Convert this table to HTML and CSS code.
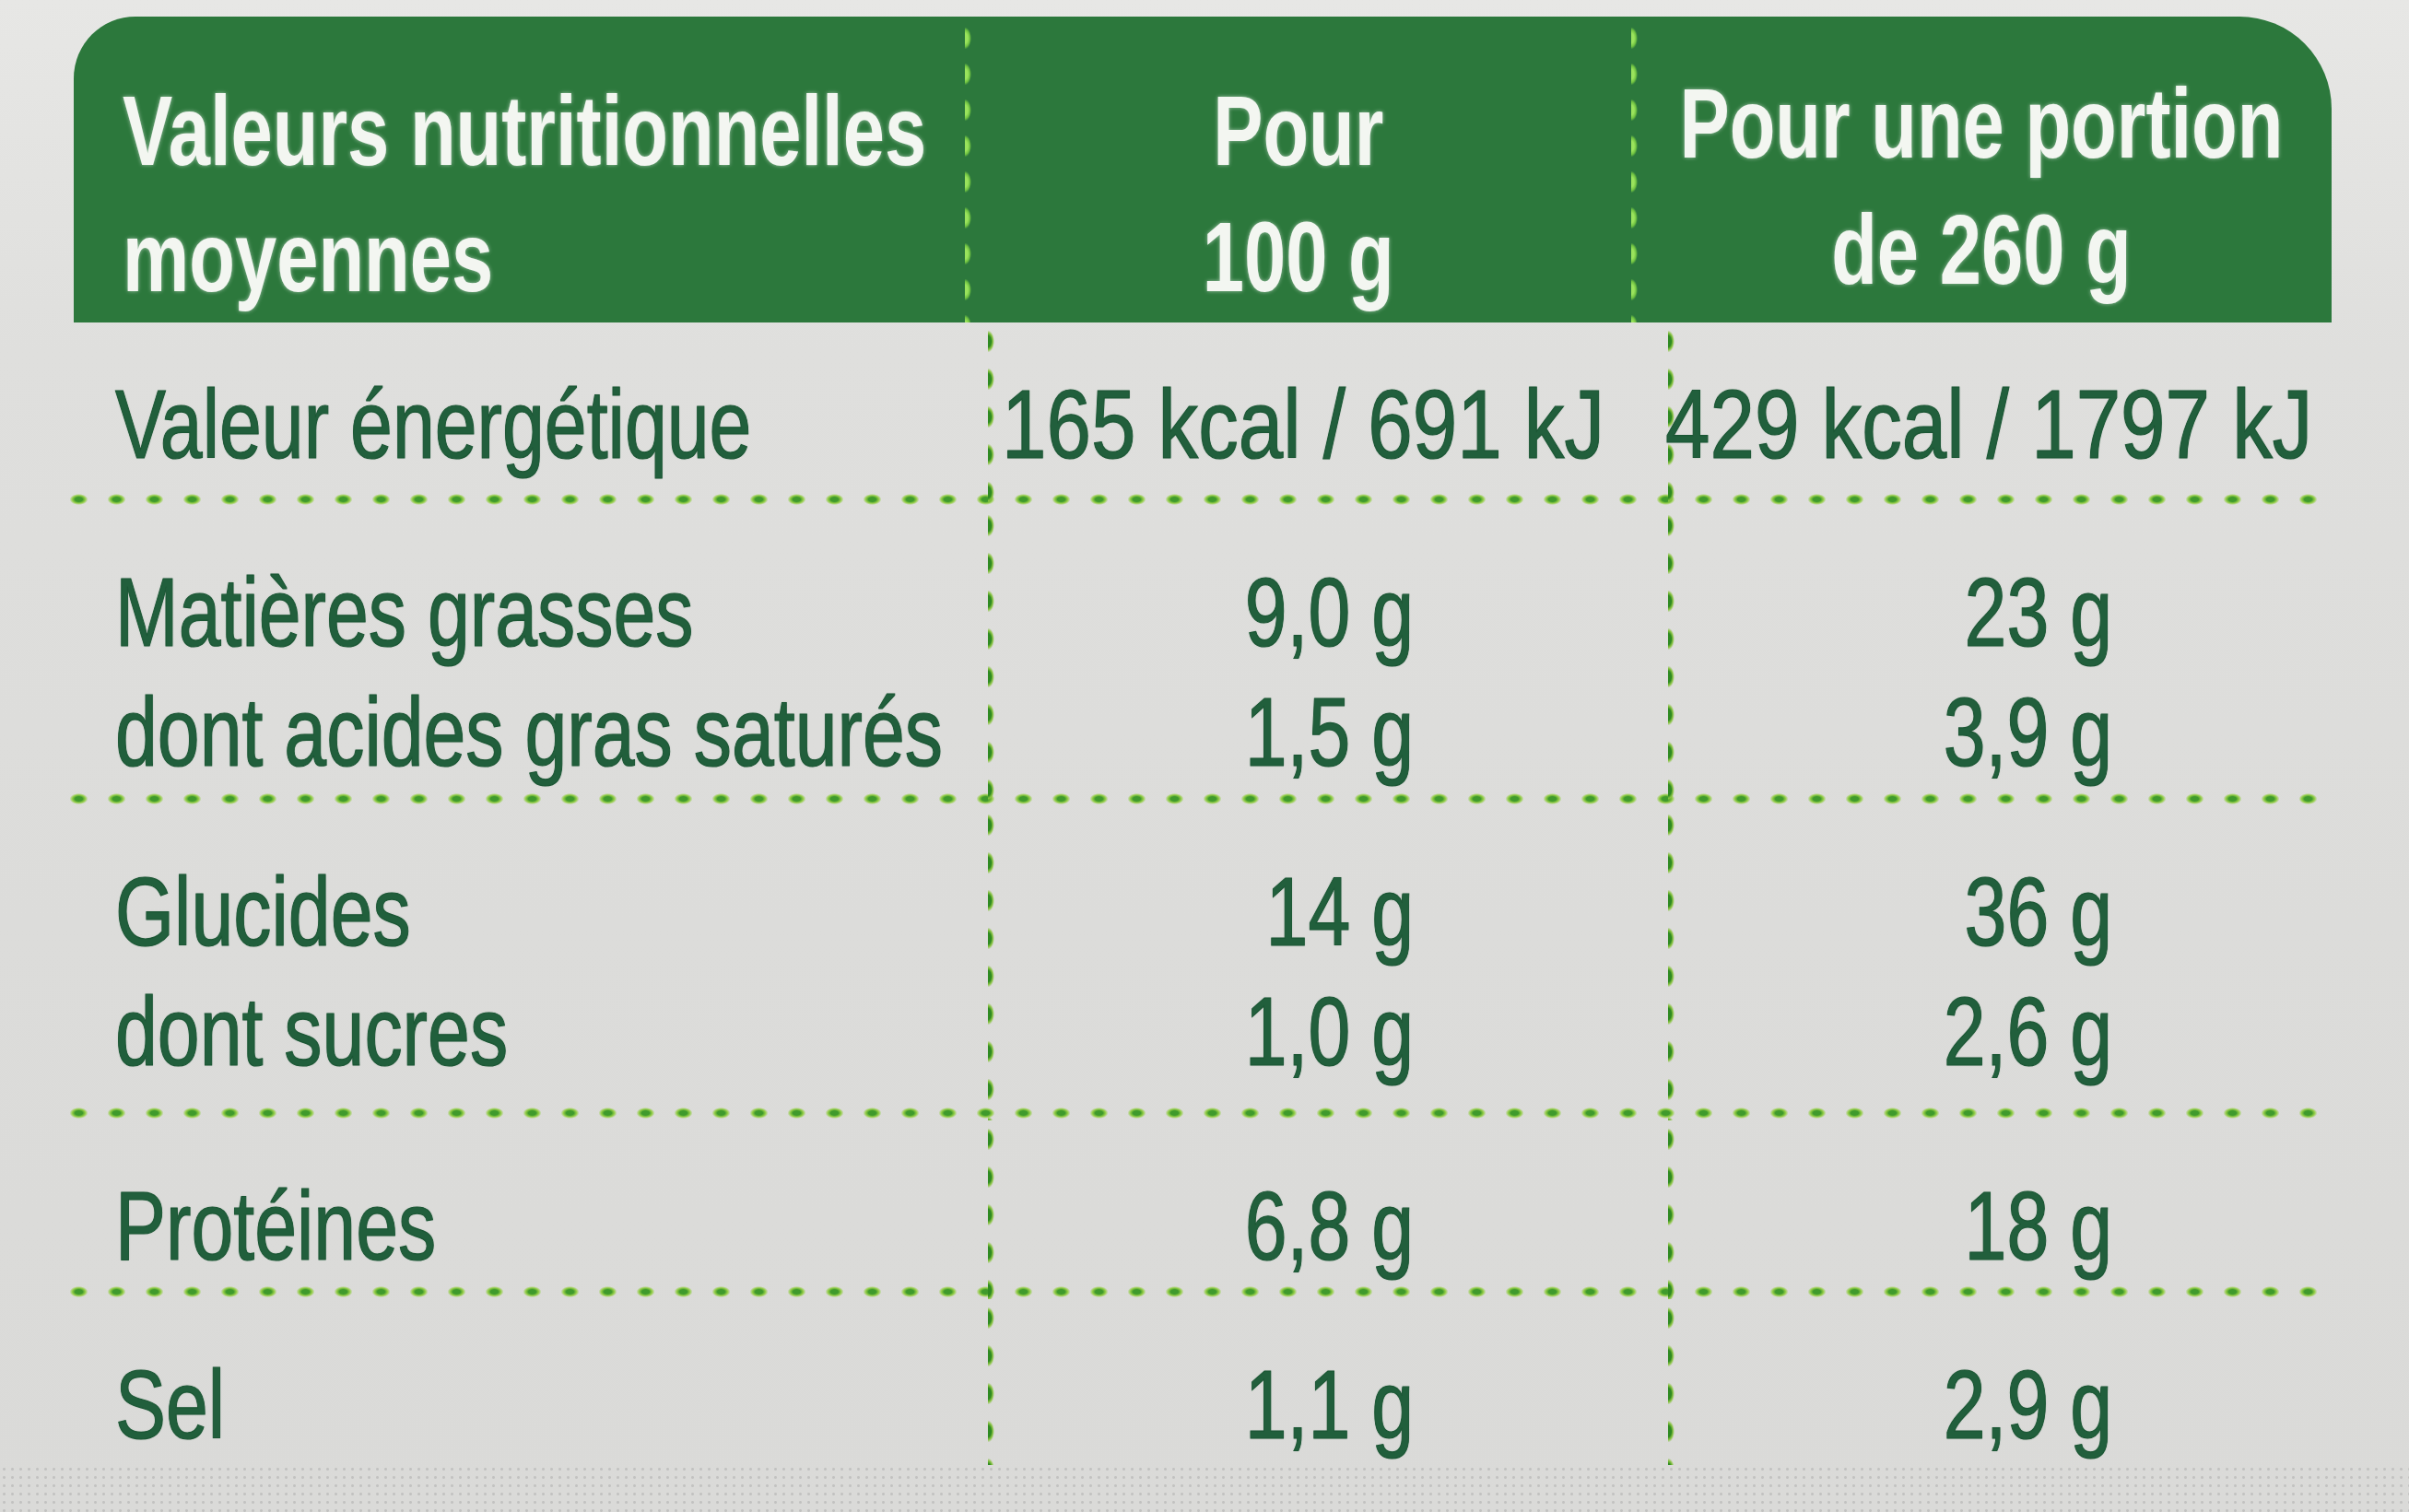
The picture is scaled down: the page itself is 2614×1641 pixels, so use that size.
FILE: index.html
```html
<!DOCTYPE html>
<html lang="fr">
<head>
<meta charset="utf-8">
<title>Valeurs nutritionnelles</title>
<link rel="stylesheet" href="styles.css">
</head>
<body>
<div class="label">
  <div class="head">
    <div class="hcell h-name"><div class="tx">Valeurs nutritionnelles<br>moyennes</div></div>
    <div class="hcell h-center"><div class="tx">Pour<br>100 g</div></div>
    <div class="hcell h-center h-portion"><div class="tx">Pour une portion<br>de 260 g</div></div>
  </div>
  <div class="row r-energy">
    <div class="cell name"><div class="tx">Valeur énergétique</div></div>
    <div class="cell val energy e1"><div class="tx">165 kcal / 691 kJ</div></div>
    <div class="cell val energy e2"><div class="tx">429 kcal / 1797 kJ</div></div>
  </div>
  <div class="row r-fat">
    <div class="cell name"><div class="tx">Matières grasses<br>dont acides gras saturés</div></div>
    <div class="cell val v1"><div class="tx">9,0 g<br>1,5 g</div></div>
    <div class="cell val v2"><div class="tx">23 g<br>3,9 g</div></div>
  </div>
  <div class="row r-carb">
    <div class="cell name"><div class="tx">Glucides<br>dont sucres</div></div>
    <div class="cell val v1"><div class="tx">14 g<br>1,0 g</div></div>
    <div class="cell val v2"><div class="tx">36 g<br>2,6 g</div></div>
  </div>
  <div class="row r-prot">
    <div class="cell name"><div class="tx">Protéines</div></div>
    <div class="cell val v1"><div class="tx">6,8 g</div></div>
    <div class="cell val v2"><div class="tx">18 g</div></div>
  </div>
  <div class="row r-salt">
    <div class="cell name"><div class="tx">Sel</div></div>
    <div class="cell val v1"><div class="tx">1,1 g</div></div>
    <div class="cell val v2"><div class="tx">2,9 g</div></div>
  </div>
</div>
<div class="texture"></div>
</body>
</html>
```
FILE: styles.css
```css
html, body {
  margin: 0;
  padding: 0;
}
body {
  width: 2614px;
  height: 1641px;
  overflow: hidden;
  background: linear-gradient(180deg, #e7e7e5 0px, #dfdfdd 380px, #dcdcda 1000px, #dadad8 1641px);
  font-family: "Liberation Sans", Arial, sans-serif;
}
.tx {
  white-space: nowrap;
}
.label {
  margin-left: 65px;
  width: 2465px;
  padding-top: 18px;
}
.head {
  margin-left: 15px;
  height: 332px;
  background: #2c783c;
  border-radius: 67px 100px 0 0;
  display: grid;
  grid-template-columns: 967px 723px minmax(0, 1fr);
  color: #f3f6f1;
  font-weight: 700;
  font-size: 107px;
  line-height: 137px;
  text-shadow: 0 0 5px rgba(255,255,255,0.55);
}
.hcell {
  padding-top: 56px;
  min-width: 0;
}
.h-name {
  padding-left: 53px;
}
.h-name .tx {
  transform: scaleX(0.76);
  transform-origin: 0 0;
}
.h-center {
  display: flex;
  justify-content: center;
  align-items: flex-start;
  background-image: radial-gradient(7px 12px at 50% 50%, #9ae35c 0 45%, #72c542 75%, transparent 100%);
  background-size: 14px 39px;
  background-repeat: repeat-y;
  background-position: -7px 4px;
}
.h-portion {
  padding-top: 48px;
}
.h-center .tx {
  flex: none;
  text-align: center;
  transform: scaleX(0.76);
  transform-origin: 50% 0;
}
.row {
  display: grid;
  grid-template-columns: 1007px 738px minmax(0, 1fr);
  color: #215f3c;
  font-size: 105px;
  line-height: 130px;
  -webkit-text-stroke: 1.2px #1b5634;
  text-shadow: 0 0 2px rgba(25,85,50,0.45);
  background-image: radial-gradient(10px 6px at 50% 50%, #3f9a2c 0 40%, #93cd46 70%, transparent 100%);
  background-size: 41px 16px;
  background-repeat: repeat-x;
  background-position: 0 100%;
}
.r-energy { height: 200px; }
.r-fat { height: 325px; }
.r-carb { height: 341px; }
.r-prot { height: 194px; }
.r-salt { height: 180px; background-image: none; }
.cell {
  padding-top: 50px;
  min-width: 0;
}
.r-energy .cell {
  padding-top: 46px;
}
.name {
  padding-left: 60px;
}
.name .tx {
  transform: scaleX(0.785);
  transform-origin: 0 0;
}
.val {
  text-align: right;
  background-image: radial-gradient(7px 12px at 50% 50%, #2f8a22 0 50%, #86c23f 75%, transparent 100%);
  background-size: 14px 41px;
  background-repeat: repeat-y;
  background-position: -7px 0;
}
.val .tx {
  transform: scaleX(0.785);
  transform-origin: 100% 0;
}
.v1 { padding-right: 276px; }
.v2 { padding-right: 238px; }
.energy {
  display: flex;
  justify-content: center;
  align-items: flex-start;
}
.energy .tx {
  flex: none;
  transform: scaleX(0.83);
  transform-origin: 50% 0;
}
.e1 { padding-right: 54px; }
.e2 { padding-right: 24px; }
.texture {
  position: absolute;
  left: 0;
  top: 1590px;
  width: 2614px;
  height: 51px;
  background-image: radial-gradient(circle, rgba(110,110,110,0.22) 0 1px, transparent 2px);
  background-size: 9px 9px;
}
```
